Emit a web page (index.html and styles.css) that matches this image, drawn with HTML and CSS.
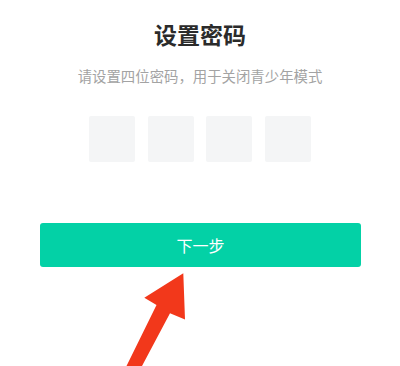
FILE: index.html
```html
<!DOCTYPE html>
<html lang="zh-CN">
<head>
<meta charset="utf-8">
<title>设置密码</title>
<link rel="stylesheet" href="styles.css">
</head>
<body>
<main class="page">
  <h1 class="title">设置密码</h1>
  <p class="subtitle">请设置四位密码，用于关闭青少年模式</p>
  <div class="code-row">
    <div class="code-box"></div>
    <div class="code-box"></div>
    <div class="code-box"></div>
    <div class="code-box"></div>
  </div>
  <button class="next-btn" type="button">下一步</button>
</main>
<svg class="arrow" width="400" height="366" viewBox="0 0 400 366" aria-hidden="true">
  <polygon points="183.3,273.3 185,319.5 170,313.3 142,366 126.5,366 156.5,305 144.3,297.7" fill="#f2381b"/>
</svg>
</body>
</html>
```
FILE: styles.css
```css
html, body {
  margin: 0;
  padding: 0;
  background: #ffffff;
}
body {
  width: 400px;
  height: 366px;
  overflow: hidden;
  position: relative;
  font-family: "Noto Sans CJK SC", "Noto Sans", sans-serif;
}
.page {
  display: flex;
  flex-direction: column;
  align-items: center;
  padding-top: 19px;
}
.title {
  margin: 0;
  font-size: 23px;
  line-height: 30px;
  font-weight: 700;
  color: #2b2b2b;
}
.subtitle {
  margin: 17px 0 0;
  font-size: 14.4px;
  line-height: 20px;
  color: #a3a3a3;
}
.code-row {
  display: flex;
  gap: 12.5px;
  margin-top: 30px;
}
.code-box {
  width: 46px;
  height: 46px;
  background: #f4f5f6;
  border-radius: 2px;
}
.next-btn {
  margin-top: 61px;
  align-self: stretch;
  margin-left: 40px;
  margin-right: 39px;
  height: 44px;
  border: none;
  border-radius: 3px;
  background: #03d1a6;
  color: #ffffff;
  font-family: "Noto Sans CJK SC", "Noto Sans", sans-serif;
  font-size: 16px;
  padding: 0;
}
.arrow {
  position: absolute;
  left: 0;
  top: 0;
}
```
